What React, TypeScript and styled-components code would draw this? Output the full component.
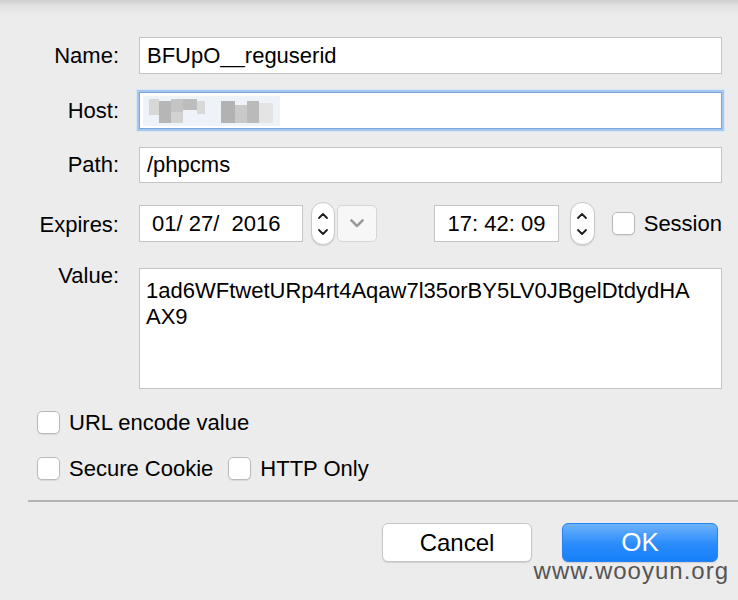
import React from "react";
import styled, { createGlobalStyle } from "styled-components";

const Global = createGlobalStyle`
  html, body { margin: 0; padding: 0; background: #ececec; }
  body { font-family: "Liberation Sans", Arial, sans-serif; }
  * { box-sizing: border-box; }
`;

const Dialog = styled.div`
  position: relative;
  width: 738px;
  height: 600px;
  overflow: hidden;
  background: linear-gradient(to bottom, #cfcfcf 0px, #e2e2e2 6px, #ebebeb 14px, #ececec 20px);
  padding-top: 37px;
  font-family: "Liberation Sans", Arial, sans-serif;
  color: #000;
`;

const Form = styled.div`
  display: grid;
  grid-template-columns: 119px 583px;
  column-gap: 20px;
  align-items: center;
`;

const Label = styled.div<{ $top?: number; $start?: boolean }>`
  font-size: 22px;
  line-height: 26px;
  text-align: right;
  margin-top: ${(p) => p.$top ?? 0}px;
  align-self: ${(p) => (p.$start ? "start" : "center")};
  ${(p) => (p.$start ? "transform: translateY(-5px);" : "")}
`;

const Field = styled.div<{ $top?: number; $h?: number; $focus?: boolean }>`
  margin-top: ${(p) => p.$top ?? 0}px;
  height: ${(p) => p.$h ?? 37}px;
  background: #fff;
  border: 1px solid ${(p) => (p.$focus ? "#7aa6dc" : "#c4c4c4")};
  box-shadow: ${(p) => (p.$focus ? "0 0 0 2px #a6c8ef, 0 0 0 3px #d8e7f8" : "none")};
  font-size: 22px;
  line-height: 26px;
  padding: 0 7px;
  display: flex;
  align-items: center;
  white-space: pre;
`;

const TextArea = styled.div<{ $top?: number }>`
  margin-top: ${(p) => p.$top ?? 0}px;
  height: 121px;
  background: #fff;
  border: 1px solid #c4c4c4;
  font-size: 22px;
  line-height: 26px;
  padding: 9px 22px 0 6px;
  word-break: break-all;
`;

const ExpiresRow = styled.div<{ $top?: number }>`
  margin-top: ${(p) => p.$top ?? 0}px;
  display: flex;
  align-items: center;
  height: 43px;
`;

const SmallField = styled.div<{ $w: number; $pl: number; $ml?: number }>`
  width: ${(p) => p.$w}px;
  height: 37px;
  margin-left: ${(p) => p.$ml ?? 0}px;
  background: #fff;
  border: 1px solid #c4c4c4;
  font-size: 22px;
  padding-left: ${(p) => p.$pl}px;
  display: flex;
  align-items: center;
  white-space: pre;
`;

const Stepper = styled.div<{ $ml: number }>`
  margin-left: ${(p) => p.$ml}px;
  width: 25px;
  height: 43px;
  border-radius: 12px;
  background: #fff;
  border: 1px solid #c9c9c9;
  box-shadow: 0 1px 1px rgba(0, 0, 0, 0.12);
  display: flex;
  align-items: center;
  justify-content: center;
`;

const DropButton = styled.div`
  margin-left: 2px;
  width: 40px;
  height: 37px;
  border-radius: 5px;
  background: #f7f7f7;
  border: 1px solid #d6d6d6;
  display: flex;
  align-items: center;
  justify-content: center;
`;

const Box = styled.span<{ $ml?: number }>`
  display: inline-block;
  flex: none;
  width: 23px;
  height: 23px;
  margin-left: ${(p) => p.$ml ?? 0}px;
  background: #fff;
  border: 1px solid #b9b9b9;
  border-radius: 5px;
  box-shadow: 0 1px 1px rgba(0, 0, 0, 0.08);
`;

const CheckText = styled.span<{ $ml?: number }>`
  margin-left: ${(p) => p.$ml ?? 9}px;
  font-size: 22px;
  line-height: 26px;
`;

const Options = styled.div`
  padding-left: 37px;
  margin-top: 22px;
  display: flex;
  flex-direction: column;
  gap: 23px;
`;

const OptionRow = styled.div`
  display: flex;
  align-items: center;
  height: 23px;
`;

const Separator = styled.div`
  margin: 20px 0 0 28px;
  height: 2px;
  background: #b4b4b4;
`;

const Buttons = styled.div`
  display: flex;
  justify-content: flex-end;
  gap: 30px;
  padding-right: 20px;
  margin-top: 21px;
`;

const Button = styled.div<{ $primary?: boolean; $w: number }>`
  width: ${(p) => p.$w}px;
  height: 39px;
  border-radius: 6px;
  font-size: ${(p) => (p.$primary ? 26 : 24)}px;
  display: flex;
  align-items: center;
  justify-content: center;
  color: ${(p) => (p.$primary ? "#fff" : "#000")};
  background: ${(p) =>
    p.$primary ? "linear-gradient(to bottom, #6db3fb, #2a8bfb 55%, #1580fa)" : "#fff"};
  border: 1px solid ${(p) => (p.$primary ? "#2a82ee" : "#c6c6c6")};
  box-shadow: 0 1px 1px rgba(0, 0, 0, 0.12);
`;

const Watermark = styled.div`
  position: absolute;
  right: 9px;
  top: 557px;
  font-size: 24px;
  color: #555;
  letter-spacing: 1px;
`;

const Chevron = ({ dir, color = "#222", w = 10 }: { dir: "up" | "down"; color?: string; w?: number }) => (
  <svg width={w} height={w * 0.6} viewBox="0 0 10 6">
    <path
      d={dir === "up" ? "M1 5 L5 1 L9 5" : "M1 1 L5 5 L9 1"}
      fill="none"
      stroke={color}
      strokeWidth={1.8}
      strokeLinecap="round"
      strokeLinejoin="round"
    />
  </svg>
);

const StepIcon = () => (
  <svg width="12" height="26" viewBox="0 0 12 26">
    <path d="M2 7 L6 3 L10 7" fill="none" stroke="#1c1c1c" strokeWidth="1.8" strokeLinecap="round" strokeLinejoin="round" />
    <path d="M2 19 L6 23 L10 19" fill="none" stroke="#1c1c1c" strokeWidth="1.8" strokeLinecap="round" strokeLinejoin="round" />
  </svg>
);

const Mosaic = () => (
  <svg width="137" height="30" viewBox="0 0 137 30" style={{ marginLeft: -4 }}>
    <rect x="0" y="0" width="137" height="30" fill="#eef3fa" />
    <rect x="6" y="3" width="10" height="16" fill="#d7d7d7" />
    <rect x="16" y="5" width="12" height="22" fill="#b6b6b6" />
    <rect x="28" y="3" width="12" height="13" fill="#c4c4c4" />
    <rect x="28" y="16" width="12" height="11" fill="#d2d2d2" />
    <rect x="40" y="3" width="14" height="11" fill="#bdbdbd" />
    <rect x="54" y="5" width="8" height="13" fill="#d9d9d9" />
    <rect x="78" y="5" width="14" height="22" fill="#b2b2b2" />
    <rect x="92" y="9" width="12" height="18" fill="#c9c9c9" />
    <rect x="104" y="5" width="12" height="22" fill="#bababa" />
    <rect x="116" y="7" width="14" height="20" fill="#e4e4e4" />
  </svg>
);

export default function App() {
  return (
    <>
      <Global />
      <Dialog>
        <Form>
          <Label>Name:</Label>
          <Field>BFUpO__reguserid</Field>

          <Label $top={18}>Host:</Label>
          <Field $top={18} $focus>
            <Mosaic />
          </Field>

          <Label $top={18}>Path:</Label>
          <Field $top={18} $h={36}>/phpcms</Field>

          <Label $top={21}>Expires:</Label>
          <ExpiresRow $top={19}>
            <SmallField $w={167} $pl={12}>01/ 27/  2016</SmallField>
            <Stepper $ml={8}>
              <StepIcon />
            </Stepper>
            <DropButton>
              <Chevron dir="down" color="#9a9a9a" w={14} />
            </DropButton>
            <SmallField $w={128} $pl={13} $ml={57}>17: 42: 09</SmallField>
            <Stepper $ml={11}>
              <StepIcon />
            </Stepper>
            <Box $ml={17} />
            <CheckText>Session</CheckText>
          </ExpiresRow>

          <Label $top={23} $start>Value:</Label>
          <TextArea $top={23}>1ad6WFtwetURp4rt4Aqaw7l35orBY5LV0JBgelDtdydHAAX9</TextArea>
        </Form>

        <Options>
          <OptionRow>
            <Box />
            <CheckText>URL encode value</CheckText>
          </OptionRow>
          <OptionRow>
            <Box />
            <CheckText>Secure Cookie</CheckText>
            <Box $ml={15} />
            <CheckText>HTTP Only</CheckText>
          </OptionRow>
        </Options>

        <Separator />

        <Buttons>
          <Button $w={150}>Cancel</Button>
          <Button $primary $w={156}>OK</Button>
        </Buttons>

        <Watermark>www.wooyun.org</Watermark>
      </Dialog>
    </>
  );
}
